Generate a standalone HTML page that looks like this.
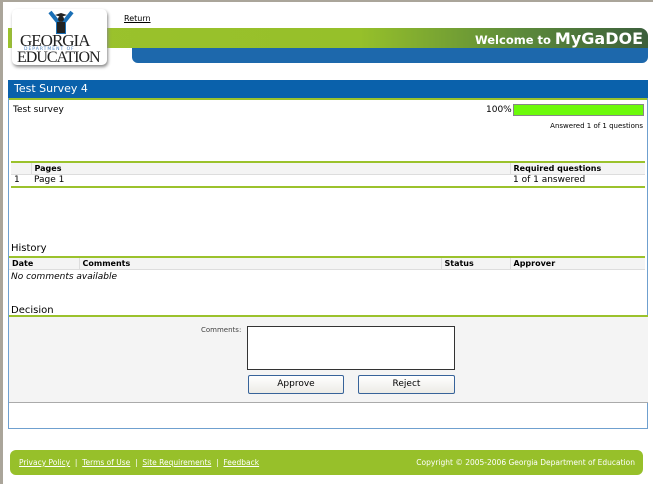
<!DOCTYPE html>
<html><head><style>
*{margin:0;padding:0;box-sizing:border-box}
body{width:653px;height:484px;background:#fff;font-family:"DejaVu Sans","Liberation Sans",sans-serif;font-size:9px;color:#000;position:relative;overflow:hidden}
.a{position:absolute}
th{font-weight:bold;text-align:left;background:#f4f4f4;border-right:1px solid #ddd;border-bottom:1px solid #ddd;padding:0 3px;height:12px;font-size:8px}
td{padding:0 3px;height:13px;font-size:9px}
table{border-collapse:collapse}
</style></head><body>
<div class="a" style="left:0;top:0;width:653px;height:2px;background:#aaa59a"></div>
<div class="a" style="left:0;top:0;width:3px;height:484px;background:#aaa59a"></div>
<div class="a" style="left:8px;top:28px;width:640px;height:20px;background:linear-gradient(90deg,#9bc22c 0%,#96c02a 55%,#5c8a3a 80%,#3c5f3c 100%);border-radius:0 8px 0 0"></div>
<div class="a" style="left:132px;top:48px;width:516px;height:15px;background:#1d68ac;border-radius:0 0 6px 6px"></div>
<div class="a" style="right:10px;top:29px;color:#fff;font-weight:bold;font-size:11.5px;font-family:'DejaVu Sans',sans-serif">Welcome to <span style="font-size:16px">MyGaDOE</span></div>
<div class="a" style="left:12px;top:9px;width:95px;height:56px;background:#fff;border-radius:5px;box-shadow:1px 2px 3px #888"></div>
<svg class="a" style="left:46px;top:10px" width="30" height="24" viewBox="0 0 30 24"><path d="M4 2 L12 12 L12 22 L18 22 L18 12 L26 2" stroke="#1a6fb5" stroke-width="4" fill="none"/><circle cx="15" cy="9" r="3" fill="#222"/><path d="M9 5 L15 3 L21 5 L15 7Z" fill="#222"/><rect x="11" y="12" width="8" height="11" fill="#222"/></svg>
<div class="a" style="left:20px;top:31px;font-family:'Liberation Serif',serif;font-size:17px;color:#222;letter-spacing:-1px">GEORGIA</div>
<div class="a" style="left:24px;top:47px;font-size:4.5px;color:#4b82c0;letter-spacing:1px">DEPARTMENT OF</div>
<div class="a" style="left:17px;top:49px;font-family:'Liberation Serif',serif;font-size:16px;color:#222;letter-spacing:-1px">EDUCATION</div>
<div class="a" style="left:124px;top:14px;font-size:8px;text-decoration:underline">Return</div>
<div class="a" style="left:8px;top:80px;width:640px;height:349px;border:1px solid #6fa0cf"></div>
<div class="a" style="left:8px;top:80px;width:640px;height:18px;background:#0a61ab;color:#fff;font-size:11px;padding:2px 6px">Test Survey 4</div>
<div class="a" style="left:9px;top:98px;width:638px;height:2px;background:#9bc22c"></div>
<div class="a" style="left:13px;top:105px">Test survey</div>
<div class="a" style="left:486px;top:105px">100%</div>
<div class="a" style="left:513px;top:104px;width:131px;height:12px;background:#6cfa0a;border:1px solid #888"></div>
<div class="a" style="right:10px;top:122px;font-size:7px">Answered 1 of 1 questions</div>
<table class="a" style="left:11px;top:161px;width:634px;border-top:2px solid #9bc22c;border-bottom:2px solid #9bc22c">
<tr><th style="width:20px"></th><th>Pages</th><th style="width:135px;border-right:0">Required questions</th></tr>
<tr><td>1</td><td>Page 1</td><td>1 of 1 answered</td></tr></table>
<div class="a" style="left:11px;top:243px;font-size:10px">History</div>
<table class="a" style="left:9px;top:256px;width:636px;border-top:2px solid #9bc22c">
<tr><th style="width:70px">Date</th><th>Comments</th><th style="width:69px">Status</th><th style="width:135px;border-right:0">Approver</th></tr></table>
<div class="a" style="left:11px;top:272px;font-style:italic">No comments available</div>
<div class="a" style="left:11px;top:305px;font-size:10px">Decision</div>
<div class="a" style="left:9px;top:315px;width:639px;height:88px;background:#f4f4f4;border-top:2px solid #9bc22c;border-bottom:1px solid #aaa"></div>
<div class="a" style="left:201px;top:326px;font-size:7px;color:#444">Comments:</div>
<div class="a" style="left:247px;top:326px;width:208px;height:44px;background:#fff;border:1px solid #333"></div>
<div class="a" style="left:248px;top:375px;width:96px;height:19px;border:1px solid #37639a;border-radius:2px;background:linear-gradient(#fff,#ecebe6);text-align:center;line-height:17px">Approve</div>
<div class="a" style="left:358px;top:375px;width:97px;height:19px;border:1px solid #37639a;border-radius:2px;background:linear-gradient(#fff,#ecebe6);text-align:center;line-height:17px">Reject</div>
<div class="a" style="left:10px;top:450px;width:633px;height:25px;background:#97c02a;border-radius:6px;color:#fff;font-size:7.5px">
<div class="a" style="left:9px;top:8px"><u>Privacy Policy</u> &nbsp;| &nbsp;<u>Terms of Use</u> &nbsp;| &nbsp;<u>Site Requirements</u> &nbsp;| &nbsp;<u>Feedback</u></div>
<div class="a" style="right:8px;top:8px">Copyright © 2005-2006 Georgia Department of Education</div></div>
</body></html>
